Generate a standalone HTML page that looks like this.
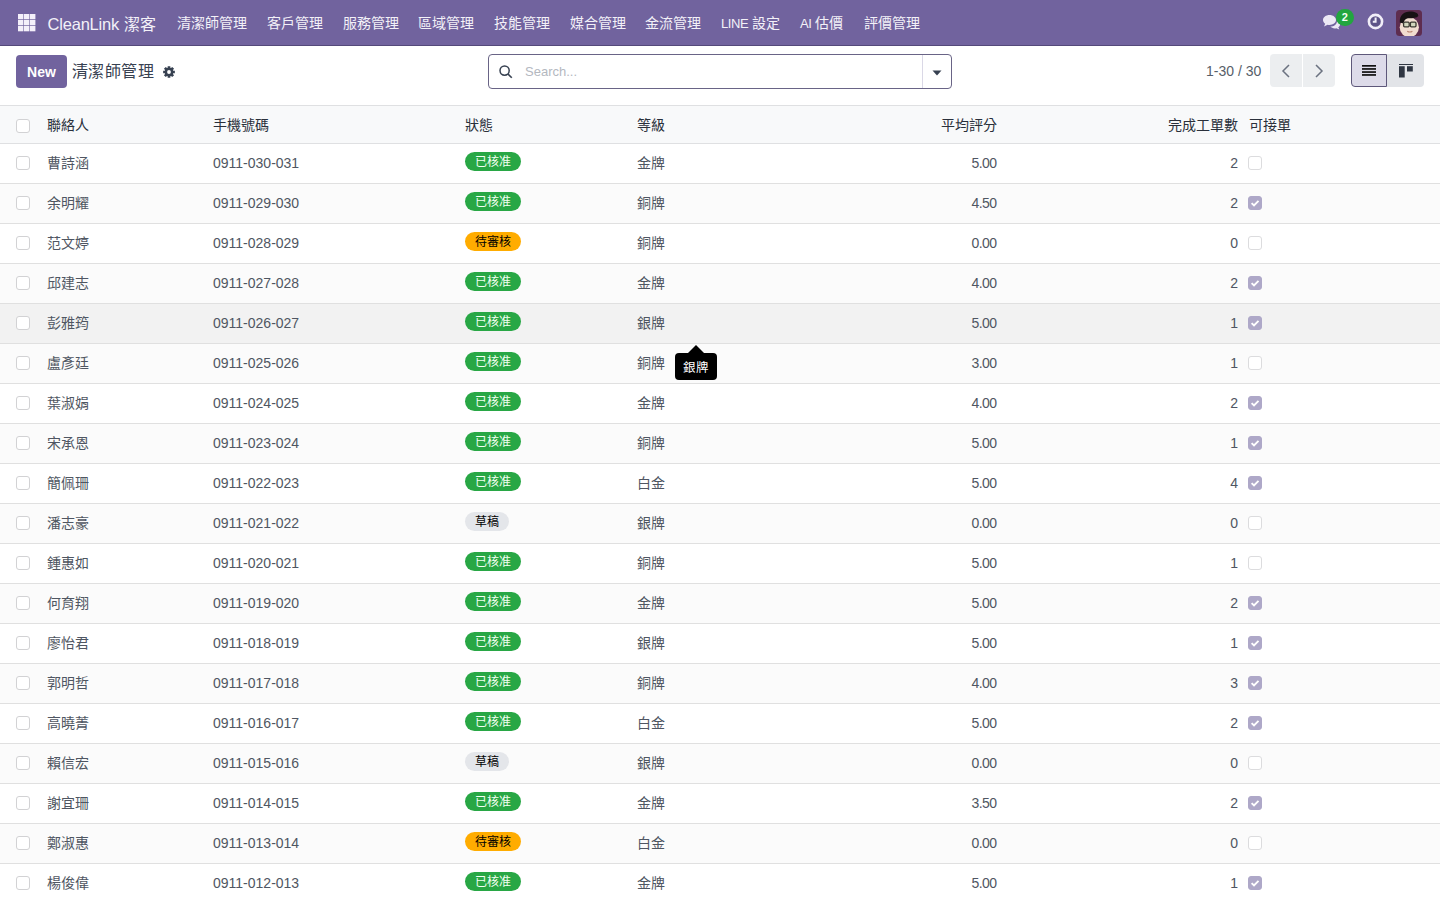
<!DOCTYPE html>
<html lang="zh-TW"><head><meta charset="utf-8"><title>CleanLink</title>
<style>
*{box-sizing:border-box;margin:0;padding:0}
html,body{width:1440px;height:900px;overflow:hidden;background:#fff}
body{font-family:"Liberation Sans",sans-serif;font-size:14px;color:#4f5662;position:relative}
.nav{position:absolute;left:0;top:0;width:1440px;height:46px;background:#71639e;border-bottom:1px solid #54497a}
.apps{position:absolute;left:17.8px;top:13.8px;width:18px;height:18px}
.apps svg{display:block}
.apps i{display:block;background:#f3f1f8}
.brand{position:absolute;left:47.5px;top:12.5px;font-size:16px;line-height:22px;color:#f3f1f8;white-space:nowrap}
.brand .lat{font-size:16.5px;letter-spacing:-0.2px}
.mi{position:absolute;top:13px;font-size:14px;line-height:20px;color:#f3f1f8;white-space:nowrap}
.mi .lat{font-size:13px;letter-spacing:-0.4px}
.chat{position:absolute;left:1322px;top:14px;width:20px;height:16px}
.cnt{position:absolute;left:1336px;top:8.5px;width:17.5px;height:17.5px;border-radius:50%;background:#22a63f;color:#f4fff4;font-size:11px;font-weight:bold;line-height:17.5px;text-align:center}
.clock{position:absolute;left:1367px;top:13px;width:17px;height:17px}
.avatar{position:absolute;left:1396px;top:10px;width:26px;height:26px}
.btn-new{position:absolute;left:16px;top:55px;width:51px;height:33px;border-radius:4px;background:#71639e;color:#fff;font-weight:bold;font-size:14px;line-height:35px;text-align:center}
.title{position:absolute;left:71.5px;top:61px;font-size:16px;letter-spacing:0.55px;line-height:22px;color:#374151}
.gear{position:absolute;left:163px;top:65px;width:12px;height:12px}
.search{position:absolute;left:488px;top:54px;width:464px;height:35px;border:1px solid #696486;border-radius:4px;background:#fff}
.sicon{position:absolute;left:10px;top:10px}
.ph{position:absolute;left:36px;top:8px;font-size:13px;line-height:18px;color:#b4b8bf}
.sdiv{position:absolute;left:433px;top:0;width:1px;height:33px;background:#dad8e6}
.caret{position:absolute;left:443px;top:15px}
.pager{position:absolute;left:1206px;top:62px;font-size:14px;line-height:18px;color:#575e69}
.pg{position:absolute;top:54px;height:33px;background:#eceef0}
.pg1{left:1270px;width:32px;border-radius:4px 0 0 4px}
.pg2{left:1303px;width:32px;border-radius:0 4px 4px 0}
.pg svg{position:absolute;left:11px;top:9px}
.vs{position:absolute;top:54px;height:33px}
.vs-list{left:1351px;width:36px;background:#dddbe9;border:1px solid #5e587a;border-radius:4px 0 0 4px}
.vs-list svg{position:absolute;left:10.2px;top:10px}
.vs-kan{left:1387px;width:37px;background:#e2e4e8;border-radius:0 4px 4px 0}
.vs-kan svg{position:absolute;left:12px;top:10px}
.thead{position:absolute;left:0;top:105px;width:1440px;height:39px;background:#f8f9fa;border-top:1px solid #dfe0e2;border-bottom:1px solid #dfe0e2}
.thead .c{color:#2a303b}
.row{position:absolute;left:0;width:1440px;height:40px;background:#fff;border-bottom:1px solid #e0e0e0}
.row.odd{background:#fbfbfb}
.row.hover{background:#f2f2f2}
.c{position:absolute;top:10px;line-height:18px;white-space:nowrap}
.cb{position:absolute;width:14px;height:14px;border:1px solid #d2d2d4;border-radius:3px;background:#fff}
.cb2{position:absolute;width:14px;height:14px;border:1px solid #dcdcde;border-radius:3px;background:#fff}
.cb2.on{background:#aea8c8;border-color:#aea8c8}
.cb2 svg{position:absolute;left:-1px;top:-1px}
.badge{position:absolute;top:8px;height:19px;border-radius:10px;font-size:11.5px;font-weight:bold;line-height:20px;padding:0 10.5px;white-space:nowrap}
.b-ok{background:#28a745;color:#f2fff2;font-weight:normal;font-size:12px;padding:0 9.5px 0 10px}
.b-wait{background:#ffac00;color:#000;padding:0 10px;font-weight:normal;font-size:12px}
.b-draft{background:#e4e6ea;color:#000;font-weight:normal;font-size:12px;padding:0 10px}
.tip{position:absolute;left:675px;top:353px;width:42px;height:27px;background:#000;color:#fff;border-radius:4px;font-size:12.5px;line-height:31px;text-align:center}
.tiparr{position:absolute;left:13px;top:-8px;width:0;height:0;border-left:8px solid transparent;border-right:8px solid transparent;border-bottom:8px solid #000}

.sc{letter-spacing:-0.6px}

</style></head><body>
<div class="nav">
<div class="apps"><svg width="18" height="18" viewBox="0 0 18 18"><rect x="0.0" y="0.0" width="5.4" height="5.3" fill="#f4f0fa"/><rect x="0.0" y="6.0" width="5.4" height="5.3" fill="#f4f0fa"/><rect x="0.0" y="12.0" width="5.4" height="5.3" fill="#f4f0fa"/><rect x="6.0" y="0.0" width="5.4" height="5.3" fill="#f4f0fa"/><rect x="6.0" y="6.0" width="5.4" height="5.3" fill="#f4f0fa"/><rect x="6.0" y="12.0" width="5.4" height="5.3" fill="#f4f0fa"/><rect x="12.0" y="0.0" width="5.4" height="5.3" fill="#f4f0fa"/><rect x="12.0" y="6.0" width="5.4" height="5.3" fill="#f4f0fa"/><rect x="12.0" y="12.0" width="5.4" height="5.3" fill="#f4f0fa"/></svg></div>
<div class="brand"><span class="lat">CleanLink</span> 潔客</div>
<div class="mi" style="left:177px">清潔師管理</div>
<div class="mi" style="left:267px">客戶管理</div>
<div class="mi" style="left:343px">服務管理</div>
<div class="mi" style="left:418px">區域管理</div>
<div class="mi" style="left:494px">技能管理</div>
<div class="mi" style="left:570px">媒合管理</div>
<div class="mi" style="left:645px">金流管理</div>
<div class="mi" style="left:721px"><span class="lat">LINE</span> 設定</div>
<div class="mi" style="left:800px"><span class="lat">AI</span> 估價</div>
<div class="mi" style="left:864px">評價管理</div>
<div class="chat"><svg width="20" height="16" viewBox="0 0 20 16"><path fill="#ece8f5" d="M7.5 1C3.9 1 1 3.2 1 6c0 1.5.8 2.8 2.2 3.7L2 12.5l3.6-1.8c.6.1 1.2.2 1.9.2 3.6 0 6.5-2.2 6.5-4.9S11.1 1 7.5 1z"/><path fill="#ece8f5" d="M15 7.2c0 3-3 5.2-6.6 5.4 1 1.1 2.6 1.8 4.4 1.8.5 0 1-.1 1.5-.2l3 1.4-1-2.3c1.1-.8 1.8-1.9 1.8-3.1 0-1.1-.5-2.1-1.4-2.8"/></svg></div>
<div class="cnt">2</div>
<div class="clock"><svg width="17" height="17" viewBox="0 0 17 17"><circle cx="8.5" cy="8.5" r="6.6" fill="#5e5488" stroke="#f1eef8" stroke-width="2.6"/><path d="M8.6 4.6v4.2H5.8" fill="none" stroke="#f1eef8" stroke-width="2"/></svg></div>
<div class="avatar"><svg width="26" height="26" viewBox="0 0 26 26"><defs><clipPath id="avc"><rect width="26" height="26" rx="3.5"/></clipPath></defs><g clip-path="url(#avc)"><rect width="26" height="26" fill="#5e2d4f"/><ellipse cx="13.3" cy="17.2" rx="9.6" ry="10" fill="#f1dccf"/><path d="M3.8 12.5C3.5 5 8 1.5 14 1.5c5 0 8.5 1.5 8.3 4.5-1.5 2-5 2.2-9 2.2-3.5 0-5 1.5-5.8 5.3z" fill="#181214"/><rect x="7.6" y="12.2" width="5.6" height="4.6" rx="1" fill="#d3d6bd" stroke="#3a3830" stroke-width="1.3"/><rect x="14.4" y="12.2" width="5.6" height="4.6" rx="1" fill="#d3d6bd" stroke="#3a3830" stroke-width="1.3"/><path d="M11.2 21.2q2.6 1.6 5.2 0" stroke="#b98572" stroke-width="1.1" fill="none"/></g></svg></div>
</div>
<div class="btn-new">New</div>
<div class="title">清潔師管理</div>
<div class="gear"><svg width="12" height="12" viewBox="0 0 12 12"><path fill="#374151" fill-rule="evenodd" d="M10.21 4.71 L11.85 4.65 L11.85 7.35 L10.21 7.29 L9.88 8.07 L11.09 9.18 L9.18 11.09 L8.07 9.88 L7.29 10.21 L7.35 11.85 L4.65 11.85 L4.71 10.21 L3.93 9.88 L2.82 11.09 L0.91 9.18 L2.12 8.07 L1.79 7.29 L0.15 7.35 L0.15 4.65 L1.79 4.71 L2.12 3.93 L0.91 2.82 L2.82 0.91 L3.93 2.12 L4.71 1.79 L4.65 0.15 L7.35 0.15 L7.29 1.79 L8.07 2.12 L9.18 0.91 L11.09 2.82 L9.88 3.93Z M7.9 6 A1.9 1.9 0 1 0 4.1 6 A1.9 1.9 0 1 0 7.9 6Z"/></svg></div>
<div class="search">
  <svg class="sicon" width="14" height="14" viewBox="0 0 14 14"><circle cx="5.6" cy="5.6" r="4.6" fill="none" stroke="#374151" stroke-width="1.5"/><path d="M9 9l3.8 3.8" stroke="#374151" stroke-width="1.6"/></svg>
  <span class="ph">Search...</span>
  <div class="sdiv"></div>
  <svg class="caret" width="10" height="6" viewBox="0 0 10 6"><path d="M0.5 0.5h9L5 5.5z" fill="#374151"/></svg>
</div>
<div class="pager">1-30 / 30</div>
<div class="pg pg1"><svg width="10" height="16" viewBox="0 0 10 16"><path d="M8 2L2 8l6 6" fill="none" stroke="#6b7280" stroke-width="1.5"/></svg></div>
<div class="pg pg2"><svg width="10" height="16" viewBox="0 0 10 16"><path d="M2 2l6 6-6 6" fill="none" stroke="#6b7280" stroke-width="1.5"/></svg></div>
<div class="vs vs-list"><svg width="14" height="11" viewBox="0 0 14 11"><rect x="0" y="0" width="14" height="1.7" fill="#111"/><rect x="0" y="3.1" width="14" height="1.7" fill="#111"/><rect x="0" y="6.2" width="14" height="1.7" fill="#111"/><rect x="0" y="9.1" width="14" height="1.7" fill="#111"/></svg></div>
<div class="vs vs-kan"><svg width="14" height="14" viewBox="0 0 14 14"><rect x="0" y="0" width="14" height="1" fill="#2f3642"/><rect x="0" y="2.2" width="5.7" height="11.3" fill="#2f3642"/><rect x="8" y="2.2" width="5.8" height="5.3" fill="#2f3642"/></svg></div>
<div class="thead"><div class="cb" style="left:16px;top:13px"></div><span class="c" style="left:47px">聯絡人</span><span class="c" style="left:213px">手機號碼</span><span class="c" style="left:465px">狀態</span><span class="c" style="left:637px">等級</span><span class="c r" style="right:443px">平均評分</span><span class="c r" style="right:202px">完成工單數</span><span class="c" style="left:1249px">可接單</span></div>
<div class="row" style="top:144px"><div class="cb" style="left:16px;top:12px"></div><span class="c" style="left:47px">曹詩涵</span><span class="c num" style="left:213px">0911-030-031</span><span class="badge b-ok" style="left:465px">已核准</span><span class="c" style="left:637px">金牌</span><span class="c r num sc" style="right:443.6px">5.00</span><span class="c r num" style="right:202px">2</span><div class="cb2" style="left:1248px;top:12px"></div></div>
<div class="row odd" style="top:184px"><div class="cb" style="left:16px;top:12px"></div><span class="c" style="left:47px">余明耀</span><span class="c num" style="left:213px">0911-029-030</span><span class="badge b-ok" style="left:465px">已核准</span><span class="c" style="left:637px">銅牌</span><span class="c r num sc" style="right:443.6px">4.50</span><span class="c r num" style="right:202px">2</span><div class="cb2 on" style="left:1248px;top:12px"><svg width="14" height="14" viewBox="0 0 14 14"><path d="M3.6 7.1l2.4 2.4 4.5-4.7" fill="none" stroke="#fff" stroke-width="1.9"/></svg></div></div>
<div class="row" style="top:224px"><div class="cb" style="left:16px;top:12px"></div><span class="c" style="left:47px">范文婷</span><span class="c num" style="left:213px">0911-028-029</span><span class="badge b-wait" style="left:465px">待審核</span><span class="c" style="left:637px">銅牌</span><span class="c r num sc" style="right:443.6px">0.00</span><span class="c r num" style="right:202px">0</span><div class="cb2" style="left:1248px;top:12px"></div></div>
<div class="row odd" style="top:264px"><div class="cb" style="left:16px;top:12px"></div><span class="c" style="left:47px">邱建志</span><span class="c num" style="left:213px">0911-027-028</span><span class="badge b-ok" style="left:465px">已核准</span><span class="c" style="left:637px">金牌</span><span class="c r num sc" style="right:443.6px">4.00</span><span class="c r num" style="right:202px">2</span><div class="cb2 on" style="left:1248px;top:12px"><svg width="14" height="14" viewBox="0 0 14 14"><path d="M3.6 7.1l2.4 2.4 4.5-4.7" fill="none" stroke="#fff" stroke-width="1.9"/></svg></div></div>
<div class="row hover" style="top:304px"><div class="cb" style="left:16px;top:12px"></div><span class="c" style="left:47px">彭雅筠</span><span class="c num" style="left:213px">0911-026-027</span><span class="badge b-ok" style="left:465px">已核准</span><span class="c" style="left:637px">銀牌</span><span class="c r num sc" style="right:443.6px">5.00</span><span class="c r num" style="right:202px">1</span><div class="cb2 on" style="left:1248px;top:12px"><svg width="14" height="14" viewBox="0 0 14 14"><path d="M3.6 7.1l2.4 2.4 4.5-4.7" fill="none" stroke="#fff" stroke-width="1.9"/></svg></div></div>
<div class="row odd" style="top:344px"><div class="cb" style="left:16px;top:12px"></div><span class="c" style="left:47px">盧彥廷</span><span class="c num" style="left:213px">0911-025-026</span><span class="badge b-ok" style="left:465px">已核准</span><span class="c" style="left:637px">銅牌</span><span class="c r num sc" style="right:443.6px">3.00</span><span class="c r num" style="right:202px">1</span><div class="cb2" style="left:1248px;top:12px"></div></div>
<div class="row" style="top:384px"><div class="cb" style="left:16px;top:12px"></div><span class="c" style="left:47px">葉淑娟</span><span class="c num" style="left:213px">0911-024-025</span><span class="badge b-ok" style="left:465px">已核准</span><span class="c" style="left:637px">金牌</span><span class="c r num sc" style="right:443.6px">4.00</span><span class="c r num" style="right:202px">2</span><div class="cb2 on" style="left:1248px;top:12px"><svg width="14" height="14" viewBox="0 0 14 14"><path d="M3.6 7.1l2.4 2.4 4.5-4.7" fill="none" stroke="#fff" stroke-width="1.9"/></svg></div></div>
<div class="row odd" style="top:424px"><div class="cb" style="left:16px;top:12px"></div><span class="c" style="left:47px">宋承恩</span><span class="c num" style="left:213px">0911-023-024</span><span class="badge b-ok" style="left:465px">已核准</span><span class="c" style="left:637px">銅牌</span><span class="c r num sc" style="right:443.6px">5.00</span><span class="c r num" style="right:202px">1</span><div class="cb2 on" style="left:1248px;top:12px"><svg width="14" height="14" viewBox="0 0 14 14"><path d="M3.6 7.1l2.4 2.4 4.5-4.7" fill="none" stroke="#fff" stroke-width="1.9"/></svg></div></div>
<div class="row" style="top:464px"><div class="cb" style="left:16px;top:12px"></div><span class="c" style="left:47px">簡佩珊</span><span class="c num" style="left:213px">0911-022-023</span><span class="badge b-ok" style="left:465px">已核准</span><span class="c" style="left:637px">白金</span><span class="c r num sc" style="right:443.6px">5.00</span><span class="c r num" style="right:202px">4</span><div class="cb2 on" style="left:1248px;top:12px"><svg width="14" height="14" viewBox="0 0 14 14"><path d="M3.6 7.1l2.4 2.4 4.5-4.7" fill="none" stroke="#fff" stroke-width="1.9"/></svg></div></div>
<div class="row odd" style="top:504px"><div class="cb" style="left:16px;top:12px"></div><span class="c" style="left:47px">潘志豪</span><span class="c num" style="left:213px">0911-021-022</span><span class="badge b-draft" style="left:465px">草稿</span><span class="c" style="left:637px">銀牌</span><span class="c r num sc" style="right:443.6px">0.00</span><span class="c r num" style="right:202px">0</span><div class="cb2" style="left:1248px;top:12px"></div></div>
<div class="row" style="top:544px"><div class="cb" style="left:16px;top:12px"></div><span class="c" style="left:47px">鍾惠如</span><span class="c num" style="left:213px">0911-020-021</span><span class="badge b-ok" style="left:465px">已核准</span><span class="c" style="left:637px">銅牌</span><span class="c r num sc" style="right:443.6px">5.00</span><span class="c r num" style="right:202px">1</span><div class="cb2" style="left:1248px;top:12px"></div></div>
<div class="row odd" style="top:584px"><div class="cb" style="left:16px;top:12px"></div><span class="c" style="left:47px">何育翔</span><span class="c num" style="left:213px">0911-019-020</span><span class="badge b-ok" style="left:465px">已核准</span><span class="c" style="left:637px">金牌</span><span class="c r num sc" style="right:443.6px">5.00</span><span class="c r num" style="right:202px">2</span><div class="cb2 on" style="left:1248px;top:12px"><svg width="14" height="14" viewBox="0 0 14 14"><path d="M3.6 7.1l2.4 2.4 4.5-4.7" fill="none" stroke="#fff" stroke-width="1.9"/></svg></div></div>
<div class="row" style="top:624px"><div class="cb" style="left:16px;top:12px"></div><span class="c" style="left:47px">廖怡君</span><span class="c num" style="left:213px">0911-018-019</span><span class="badge b-ok" style="left:465px">已核准</span><span class="c" style="left:637px">銀牌</span><span class="c r num sc" style="right:443.6px">5.00</span><span class="c r num" style="right:202px">1</span><div class="cb2 on" style="left:1248px;top:12px"><svg width="14" height="14" viewBox="0 0 14 14"><path d="M3.6 7.1l2.4 2.4 4.5-4.7" fill="none" stroke="#fff" stroke-width="1.9"/></svg></div></div>
<div class="row odd" style="top:664px"><div class="cb" style="left:16px;top:12px"></div><span class="c" style="left:47px">郭明哲</span><span class="c num" style="left:213px">0911-017-018</span><span class="badge b-ok" style="left:465px">已核准</span><span class="c" style="left:637px">銅牌</span><span class="c r num sc" style="right:443.6px">4.00</span><span class="c r num" style="right:202px">3</span><div class="cb2 on" style="left:1248px;top:12px"><svg width="14" height="14" viewBox="0 0 14 14"><path d="M3.6 7.1l2.4 2.4 4.5-4.7" fill="none" stroke="#fff" stroke-width="1.9"/></svg></div></div>
<div class="row" style="top:704px"><div class="cb" style="left:16px;top:12px"></div><span class="c" style="left:47px">高曉菁</span><span class="c num" style="left:213px">0911-016-017</span><span class="badge b-ok" style="left:465px">已核准</span><span class="c" style="left:637px">白金</span><span class="c r num sc" style="right:443.6px">5.00</span><span class="c r num" style="right:202px">2</span><div class="cb2 on" style="left:1248px;top:12px"><svg width="14" height="14" viewBox="0 0 14 14"><path d="M3.6 7.1l2.4 2.4 4.5-4.7" fill="none" stroke="#fff" stroke-width="1.9"/></svg></div></div>
<div class="row odd" style="top:744px"><div class="cb" style="left:16px;top:12px"></div><span class="c" style="left:47px">賴信宏</span><span class="c num" style="left:213px">0911-015-016</span><span class="badge b-draft" style="left:465px">草稿</span><span class="c" style="left:637px">銀牌</span><span class="c r num sc" style="right:443.6px">0.00</span><span class="c r num" style="right:202px">0</span><div class="cb2" style="left:1248px;top:12px"></div></div>
<div class="row" style="top:784px"><div class="cb" style="left:16px;top:12px"></div><span class="c" style="left:47px">謝宜珊</span><span class="c num" style="left:213px">0911-014-015</span><span class="badge b-ok" style="left:465px">已核准</span><span class="c" style="left:637px">金牌</span><span class="c r num sc" style="right:443.6px">3.50</span><span class="c r num" style="right:202px">2</span><div class="cb2 on" style="left:1248px;top:12px"><svg width="14" height="14" viewBox="0 0 14 14"><path d="M3.6 7.1l2.4 2.4 4.5-4.7" fill="none" stroke="#fff" stroke-width="1.9"/></svg></div></div>
<div class="row odd" style="top:824px"><div class="cb" style="left:16px;top:12px"></div><span class="c" style="left:47px">鄭淑惠</span><span class="c num" style="left:213px">0911-013-014</span><span class="badge b-wait" style="left:465px">待審核</span><span class="c" style="left:637px">白金</span><span class="c r num sc" style="right:443.6px">0.00</span><span class="c r num" style="right:202px">0</span><div class="cb2" style="left:1248px;top:12px"></div></div>
<div class="row" style="top:864px"><div class="cb" style="left:16px;top:12px"></div><span class="c" style="left:47px">楊俊偉</span><span class="c num" style="left:213px">0911-012-013</span><span class="badge b-ok" style="left:465px">已核准</span><span class="c" style="left:637px">金牌</span><span class="c r num sc" style="right:443.6px">5.00</span><span class="c r num" style="right:202px">1</span><div class="cb2 on" style="left:1248px;top:12px"><svg width="14" height="14" viewBox="0 0 14 14"><path d="M3.6 7.1l2.4 2.4 4.5-4.7" fill="none" stroke="#fff" stroke-width="1.9"/></svg></div></div>
<div class="tip"><div class="tiparr"></div>銀牌</div>
</body></html>
